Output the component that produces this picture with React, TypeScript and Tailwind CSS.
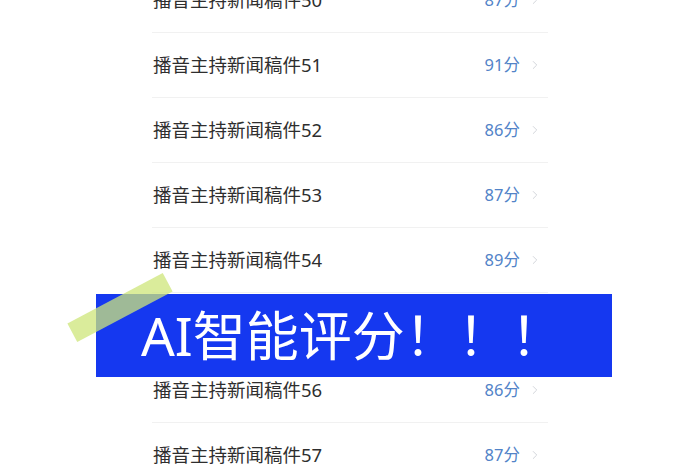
import React from 'react';
import { ChevronRight } from 'lucide-react';

const ROWS = [
  { n: 50, score: 87 },
  { n: 51, score: 91 },
  { n: 52, score: 86 },
  { n: 53, score: 87 },
  { n: 54, score: 89 },
  { n: 55, score: 0 }, // sits under the banner
  { n: 56, score: 86 },
  { n: 57, score: 87 },
];

export default function App() {
  return (
    <div
      className="relative w-[700px] h-[470px] overflow-hidden bg-white"
      style={{ fontFamily: '"Noto Sans", "Noto Sans CJK SC", sans-serif' }}
    >
      {/* list */}
      <div className="w-[396px] mx-auto -mt-[32px]">
        {ROWS.map((r) =>
          r.score ? (
            <div
              key={r.n}
              className="h-[65px] flex items-center justify-between border-b border-[#f1f1f1] pl-[1px] pr-[6px]"
            >
              <span className="text-[18.5px] text-[#2e2e2e]">播音主持新闻稿件{r.n}</span>
              <span className="flex items-center gap-[8px]">
                <span className="text-[16.5px] text-[#5283c8]">{r.score}分</span>
                <ChevronRight className="w-[14px] h-[16px] text-[#cdd0d6]" strokeWidth={1.5} />
              </span>
            </div>
          ) : (
            <div key={r.n} className="h-[65px] border-b border-[#f1f1f1]" />
          )
        )}
      </div>

      {/* banner overlay */}
      <div className="absolute left-[96px] top-[294px] w-[516px] h-[83px] bg-[#1538f0] flex items-center pl-[45px]">
        <span className="text-[53px] leading-none text-white font-normal">AI智能评分！！！</span>
      </div>

      {/* highlighter stripe */}
      <div className="absolute left-[66px] top-[297px] w-[108px] h-[21px] bg-[#cde57a]/75 -rotate-[28deg]" />
    </div>
  );
}
